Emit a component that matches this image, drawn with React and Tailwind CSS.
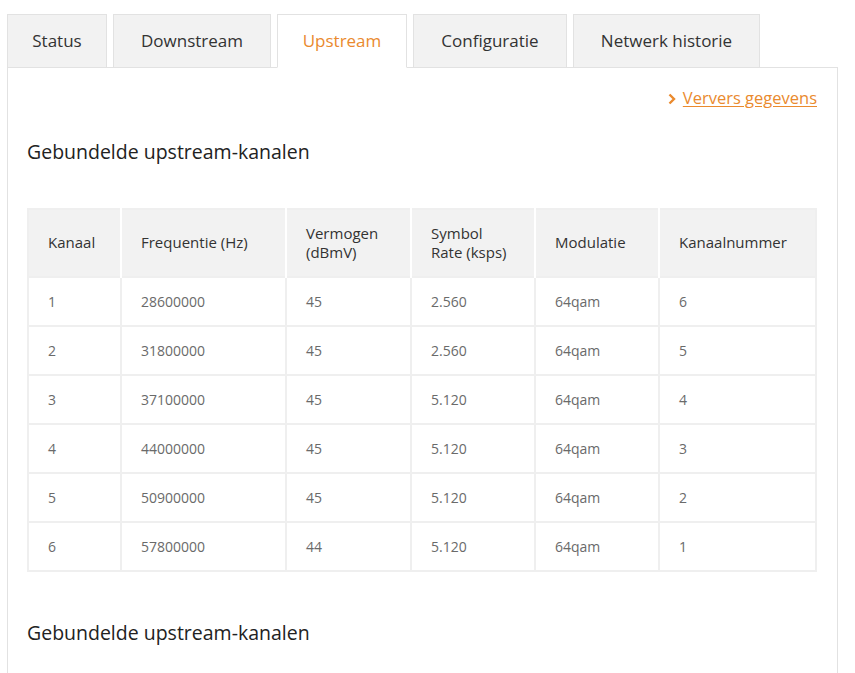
const tabs = ['Status', 'Downstream', 'Upstream', 'Configuratie', 'Netwerk historie'];
const tabWidths = ['w-[100px]', 'w-[158px]', 'w-[130px]', 'w-[154px]', 'w-[187px]'];

const columns = [
  { key: 'kanaal', header: 'Kanaal', width: 'w-[93px]' },
  { key: 'freq', header: 'Frequentie (Hz)', width: 'w-[165px]' },
  { key: 'power', header: <>Vermogen<br />(dBmV)</>, width: 'w-[125px]' },
  { key: 'rate', header: <>Symbol<br />Rate (ksps)</>, width: 'w-[124px]' },
  { key: 'mod', header: 'Modulatie', width: 'w-[124px]' },
  { key: 'nr', header: 'Kanaalnummer', width: '' },
];

const rows = [
  ['1', '28600000', '45', '2.560', '64qam', '6'],
  ['2', '31800000', '45', '2.560', '64qam', '5'],
  ['3', '37100000', '45', '5.120', '64qam', '4'],
  ['4', '44000000', '45', '5.120', '64qam', '3'],
  ['5', '50900000', '45', '5.120', '64qam', '2'],
  ['6', '57800000', '44', '5.120', '64qam', '1'],
];

export default function App() {
  return (
    <div className="min-h-[673px] bg-white pl-[7px] pr-[17px] pt-[14px] font-['Open_Sans',sans-serif] text-[#333]">
      {/* tab strip */}
      <div className="flex gap-[6px]">
        {tabs.map((t, i) => (
          <div
            key={t}
            className={`${tabWidths[i]} flex h-[54px] items-center justify-center border border-[#e2e2e2] text-[17px] ${
              t === 'Upstream'
                ? 'relative z-10 -mb-px border-b-white bg-white text-[#ea8a2e]'
                : 'bg-[#f2f2f2] text-[#333]'
            }`}
          >
            {t}
          </div>
        ))}
      </div>

      <div className="-mt-px h-[607px] border border-b-0 border-[#e2e2e2] pl-[19px] pr-[20px] pt-[18px]">
        <div className="flex justify-end">
          <a href="#" className="flex items-center gap-[7px] text-[16.5px] text-[#ea8a2e]">
            <svg width="8" height="12" viewBox="0 0 8 12" className="mt-px">
              <path d="M1.5 1.5 6 6l-4.5 4.5" fill="none" stroke="#ea8a2e" strokeWidth="2.4" />
            </svg>
            <span className="underline underline-offset-2">Ververs gegevens</span>
          </a>
        </div>

        <h2 className="mt-[29px] text-[19.5px] leading-6 text-[#222]">Gebundelde upstream-kanalen</h2>

        <table className="mt-[44px] w-full border-collapse border-2 border-[#efefef] text-left">
          <thead>
            <tr className="bg-[#f2f2f2]">
              {columns.map((c, i) => (
                <th
                  key={c.key}
                  className={`${c.width} h-[68px] px-[19px] text-[15px] font-normal leading-[19px] text-[#333] ${
                    i > 0 ? 'border-l-2 border-white' : ''
                  }`}
                >
                  {c.header}
                </th>
              ))}
            </tr>
          </thead>
          <tbody>
            {rows.map((r) => (
              <tr key={r[0]}>
                {r.map((v, j) => (
                  <td key={j} className="h-[49px] border-2 border-[#efefef] px-[19px] text-[14px] text-[#6a6a6a]">
                    {v}
                  </td>
                ))}
              </tr>
            ))}
          </tbody>
        </table>

        <h2 className="mt-[49px] text-[19.5px] leading-6 text-[#222]">Gebundelde upstream-kanalen</h2>
      </div>
    </div>
  );
}
